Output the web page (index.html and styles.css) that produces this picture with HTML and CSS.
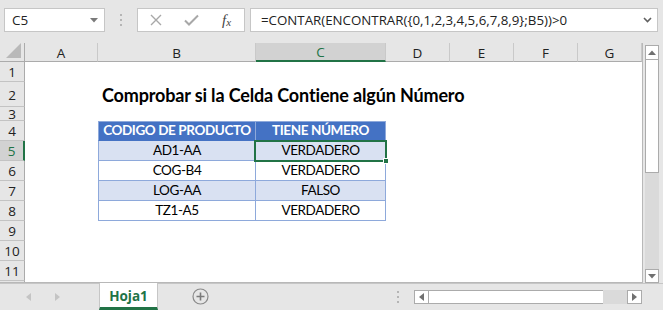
FILE: index.html
```html
<!DOCTYPE html>
<html lang="es">
<head>
<meta charset="utf-8">
<title>Hoja1</title>
<link rel="stylesheet" href="styles.css">
</head>
<body>
<div class="app">
  <div class="formula-bar">
    <div class="namebox">
      <span class="namebox-text">C5</span>
      <svg class="nb-arrow" width="8" height="5" viewBox="0 0 8 5"><path d="M0 0h8L4 4.5z" fill="#7a7a7a"/></svg>
    </div>
    <div class="grip"><i></i><i></i><i></i></div>
    <div class="fxbox">
      <svg width="12" height="12" viewBox="0 0 12 12"><path d="M1 1L11 11M11 1L1 11" stroke="#a8a8a8" stroke-width="1.4" fill="none"/></svg>
      <svg width="15" height="12" viewBox="0 0 15 12"><path d="M1 6.5L5 10.5L14 1.5" stroke="#a8a8a8" stroke-width="2" fill="none"/></svg>
      <span class="fx">f<sub>x</sub></span>
    </div>
    <div class="formula">
      <span class="formula-text">=CONTAR(ENCONTRAR({0,1,2,3,4,5,6,7,8,9};B5))&gt;0</span>
      <svg width="9" height="6" viewBox="0 0 9 6"><path d="M1 1L4.5 4.5L8 1" stroke="#606060" stroke-width="1.6" fill="none"/></svg>
    </div>
  </div>

  <div class="main">
    <div class="grid">
      <div class="ch corner"><svg width="15" height="15" viewBox="0 0 15 15"><path d="M15 0V15H0z" fill="#b9b9b9"/></svg></div>
      <div class="ch">A</div>
      <div class="ch">B</div>
      <div class="ch sel">C</div>
      <div class="ch">D</div>
      <div class="ch">E</div>
      <div class="ch">F</div>
      <div class="ch">G</div>

      <div class="rh">1</div><div class="c"></div><div class="c"></div><div class="c"></div><div class="c"></div><div class="c"></div><div class="c"></div><div class="c"></div>

      <div class="rh">2</div><div class="c"></div><div class="c title">Comprobar si la Celda Contiene algún Número</div><div class="c"></div><div class="c"></div><div class="c"></div><div class="c"></div><div class="c"></div>

      <div class="rh">3</div><div class="c"></div><div class="c"></div><div class="c"></div><div class="c"></div><div class="c"></div><div class="c"></div><div class="c"></div>

      <div class="rh">4</div><div class="c"></div><div class="c t th tb">CODIGO DE PRODUCTO</div><div class="c t th tc">TIENE NÚMERO</div><div class="c"></div><div class="c"></div><div class="c"></div><div class="c"></div>

      <div class="rh sel">5</div><div class="c"></div><div class="c t band tb">AD1-AA</div><div class="c t band tc">VERDADERO</div><div class="c"></div><div class="c"></div><div class="c"></div><div class="c"></div>

      <div class="rh">6</div><div class="c"></div><div class="c t tb">COG-B4</div><div class="c t tc">VERDADERO</div><div class="c"></div><div class="c"></div><div class="c"></div><div class="c"></div>

      <div class="rh">7</div><div class="c"></div><div class="c t band tb">LOG-AA</div><div class="c t band tc">FALSO</div><div class="c"></div><div class="c"></div><div class="c"></div><div class="c"></div>

      <div class="rh">8</div><div class="c"></div><div class="c t tb">TZ1-A5</div><div class="c t tc">VERDADERO</div><div class="c"></div><div class="c"></div><div class="c"></div><div class="c"></div>

      <div class="rh">9</div><div class="c"></div><div class="c"></div><div class="c"></div><div class="c"></div><div class="c"></div><div class="c"></div><div class="c"></div>
      <div class="rh">10</div><div class="c"></div><div class="c"></div><div class="c"></div><div class="c"></div><div class="c"></div><div class="c"></div><div class="c"></div>
      <div class="rh">11</div><div class="c"></div><div class="c"></div><div class="c"></div><div class="c"></div><div class="c"></div><div class="c"></div><div class="c"></div>
      <div class="rh"></div><div class="c"></div><div class="c"></div><div class="c"></div><div class="c"></div><div class="c"></div><div class="c"></div><div class="c"></div>

      <div class="selection"><span class="handle"></span></div>
    </div>
    <div class="vscroll">
      <div class="sbtn"><svg width="8" height="5" viewBox="0 0 8 5"><path d="M0 5h8L4 0.5z" fill="#707070"/></svg></div>
      <div class="vthumb"></div>
      <div class="vtrack"></div>
      <div class="sbtn"><svg width="8" height="5" viewBox="0 0 8 5"><path d="M0 0h8L4 4.5z" fill="#707070"/></svg></div>
    </div>
  </div>

  <div class="tabbar">
    <div class="tabnav">
      <svg width="5" height="8" viewBox="0 0 5 8"><path d="M5 0V8L0 4z" fill="#c4c4c4"/></svg>
      <svg width="5" height="8" viewBox="0 0 5 8"><path d="M0 0V8L5 4z" fill="#c4c4c4"/></svg>
    </div>
    <div class="tab">Hoja1</div>
    <div class="addsheet">
      <svg width="17" height="17" viewBox="0 0 17 17"><circle cx="8.5" cy="8.5" r="7.5" fill="none" stroke="#8a8a8a" stroke-width="1.2"/><path d="M8.5 4.5V12.5M4.5 8.5H12.5" stroke="#7a7a7a" stroke-width="1.6"/></svg>
    </div>
    <div class="spacer"></div>
    <div class="hgrip"><i></i><i></i><i></i></div>
    <div class="hscroll">
      <div class="hbtn"><svg width="5" height="8" viewBox="0 0 5 8"><path d="M5 0V8L0 4z" fill="#707070"/></svg></div>
      <div class="hthumb"></div>
      <div class="htrack"></div>
      <div class="hbtn"><svg width="5" height="8" viewBox="0 0 5 8"><path d="M0 0V8L5 4z" fill="#707070"/></svg></div>
    </div>
  </div>
</div>
</body>
</html>
```

FILE: styles.css
```css
* { box-sizing: border-box; }
html, body { margin: 0; padding: 0; }
body {
  width: 663px;
  height: 310px;
  overflow: hidden;
  background: #e6e6e6;
  font-family: "Open Sans", "Noto Sans", sans-serif;
  color: #222;
}
.app { display: flex; flex-direction: column; width: 663px; height: 310px; }

/* formula bar */
.formula-bar {
  height: 43px;
  display: flex;
  align-items: flex-start;
  padding: 8px 0 0 4px;
}
.namebox {
  width: 101px;
  height: 24px;
  background: #fff;
  border: 1px solid #c6c6c6;
  display: flex;
  align-items: center;
  justify-content: space-between;
  padding: 0 6px 0 7px;
}
.namebox-text { font-size: 13.5px; color: #222; }
.grip {
  width: 32px;
  height: 24px;
  display: flex;
  flex-direction: column;
  align-items: center;
  justify-content: center;
  gap: 3px;
}
.grip i, .hgrip i { display: block; width: 2px; height: 2px; background: #b5b5b5; }
.fxbox {
  width: 108px;
  height: 24px;
  background: #fff;
  border: 1px solid #c6c6c6;
  display: flex;
  align-items: center;
  padding: 0 0 0 12px;
  gap: 22px;
}
.fx {
  font-family: "Liberation Serif", serif;
  font-style: italic;
  font-size: 15px;
  color: #444;
  margin-left: 1px;
  line-height: 1;
}
.fx sub { font-size: 11px; vertical-align: -1px; }
.formula {
  width: 408px;
  height: 24px;
  margin-left: 5px;
  background: #fff;
  border: 1px solid #c6c6c6;
  display: flex;
  align-items: center;
  justify-content: space-between;
  padding: 0 5px 0 10px;
}
.formula-text { font-size: 13.3px; color: #222; white-space: nowrap; }

/* sheet */
.main { display: flex; height: 240px; }
.grid {
  position: relative;
  width: 643px;
  height: 240px;
  overflow: hidden;
  background: #fff;
  border-right: 1px solid #b8b8b8;
  border-bottom: 1px solid #b8b8b8;
  display: grid;
  grid-template-columns: 25px 73px 158px 130px 64px 64px 64px 64px;
  grid-template-rows: 19px 20px 25px 14px 20px 20px 20px 20px 20px 20px 20px 20px 20px;
  align-content: start;
}
.ch {
  background: #e6e6e6;
  border-right: 1px solid #c9c9c9;
  border-bottom: 1px solid #ababab;
  display: flex;
  align-items: center;
  justify-content: center;
  font-size: 13.5px;
  color: #222;
  padding-top: 1px;
}
.ch.corner { justify-content: flex-end; align-items: flex-end; padding: 0 3px 3px 0; border-right-color: #ababab; }
.ch.sel { background: #d2d2d2; border-bottom: 2px solid #217346; color: #217346; }
.rh {
  background: #e6e6e6;
  border-right: 1px solid #ababab;
  border-bottom: 1px solid #c3c3c3;
  display: flex;
  align-items: center;
  justify-content: center;
  font-size: 13.5px;
  color: #222;
  padding-top: 1px;
}
.rh.sel { background: #d2d2d2; border-right: 2px solid #217346; color: #217346; }
.c {
  font-family: "Lato", "Liberation Sans", sans-serif;
  font-size: 13.5px;
  letter-spacing: -0.4px;
  color: #000;
  white-space: nowrap;
}
.title {
  font-weight: 700;
  font-size: 18px;
  letter-spacing: -0.15px;
  padding: 2px 0 0 4px;
  overflow: visible;
  line-height: 22px;
}
.t {
  display: flex;
  align-items: flex-end;
  justify-content: center;
  padding-bottom: 1px;
  border-bottom: 1px solid #8ea9db;
  border-right: 1px solid #8ea9db;
  line-height: 18px;
}
.tb { border-left: 1px solid #8ea9db; }
.th { background: #4472c4; color: #fff; font-weight: 700; border-top: 1px solid #8ea9db; border-bottom-color: #4472c4; }
.th.tb { border-left-color: #8ea9db; }
.band { background: #d9e1f2; }

.selection {
  position: absolute;
  left: 254px;
  top: 97px;
  width: 133px;
  height: 22px;
  border: 2px solid #217346;
  pointer-events: none;
}
.handle {
  position: absolute;
  right: -4px;
  bottom: -4px;
  width: 6px;
  height: 6px;
  background: #217346;
  border: 1px solid #fff;
}

/* vertical scrollbar */
.vscroll {
  width: 20px;
  display: flex;
  flex-direction: column;
  padding: 2px 4px 0 2px;
}
.sbtn {
  height: 15px;
  background: #fff;
  border: 1px solid #ababab;
  display: flex;
  align-items: center;
  justify-content: center;
}
.vscroll .sbtn:last-child { height: 14px; }
.vthumb { height: 113px; background: #fff; border-left: 1px solid #ababab; border-right: 1px solid #ababab; border-bottom: 1px solid #ababab; }
.vtrack { height: 96px; background: #dadada; }

/* tabs */
.tabbar {
  height: 27px;
  display: flex;
  border-top: 1px solid #c6c6c6;
}
.tabnav {
  width: 99px;
  display: flex;
  align-items: center;
  padding-left: 26px;
  gap: 24px;
  padding-bottom: 1px;
}
.tab {
  width: 59px;
  margin-top: -1px;
  background: #fff;
  border-left: 1px solid #c6c6c6;
  border-right: 1px solid #c6c6c6;
  border-bottom: 3px solid #217346;
  display: flex;
  align-items: center;
  justify-content: center;
  font-weight: 700;
  font-size: 13.5px;
  color: #217346;
  padding-top: 1px;
}
.addsheet {
  width: 84px;
  display: flex;
  align-items: center;
  justify-content: center;
  padding-bottom: 1px;
}
.spacer { flex: 1; }
.hgrip {
  width: 16px;
  display: flex;
  flex-direction: column;
  align-items: center;
  justify-content: center;
  gap: 3px;
  margin-right: 8px;
}
.hscroll {
  width: 228px;
  height: 14px;
  margin-top: 6px;
  margin-right: 21px;
  display: flex;
}
.hbtn {
  width: 15px;
  background: #fff;
  border: 1px solid #ababab;
  display: flex;
  align-items: center;
  justify-content: center;
}
.hthumb { width: 174px; background: #fff; border-top: 1px solid #ababab; border-bottom: 1px solid #ababab; }
.htrack { width: 24px; background: #dadada; }
```
